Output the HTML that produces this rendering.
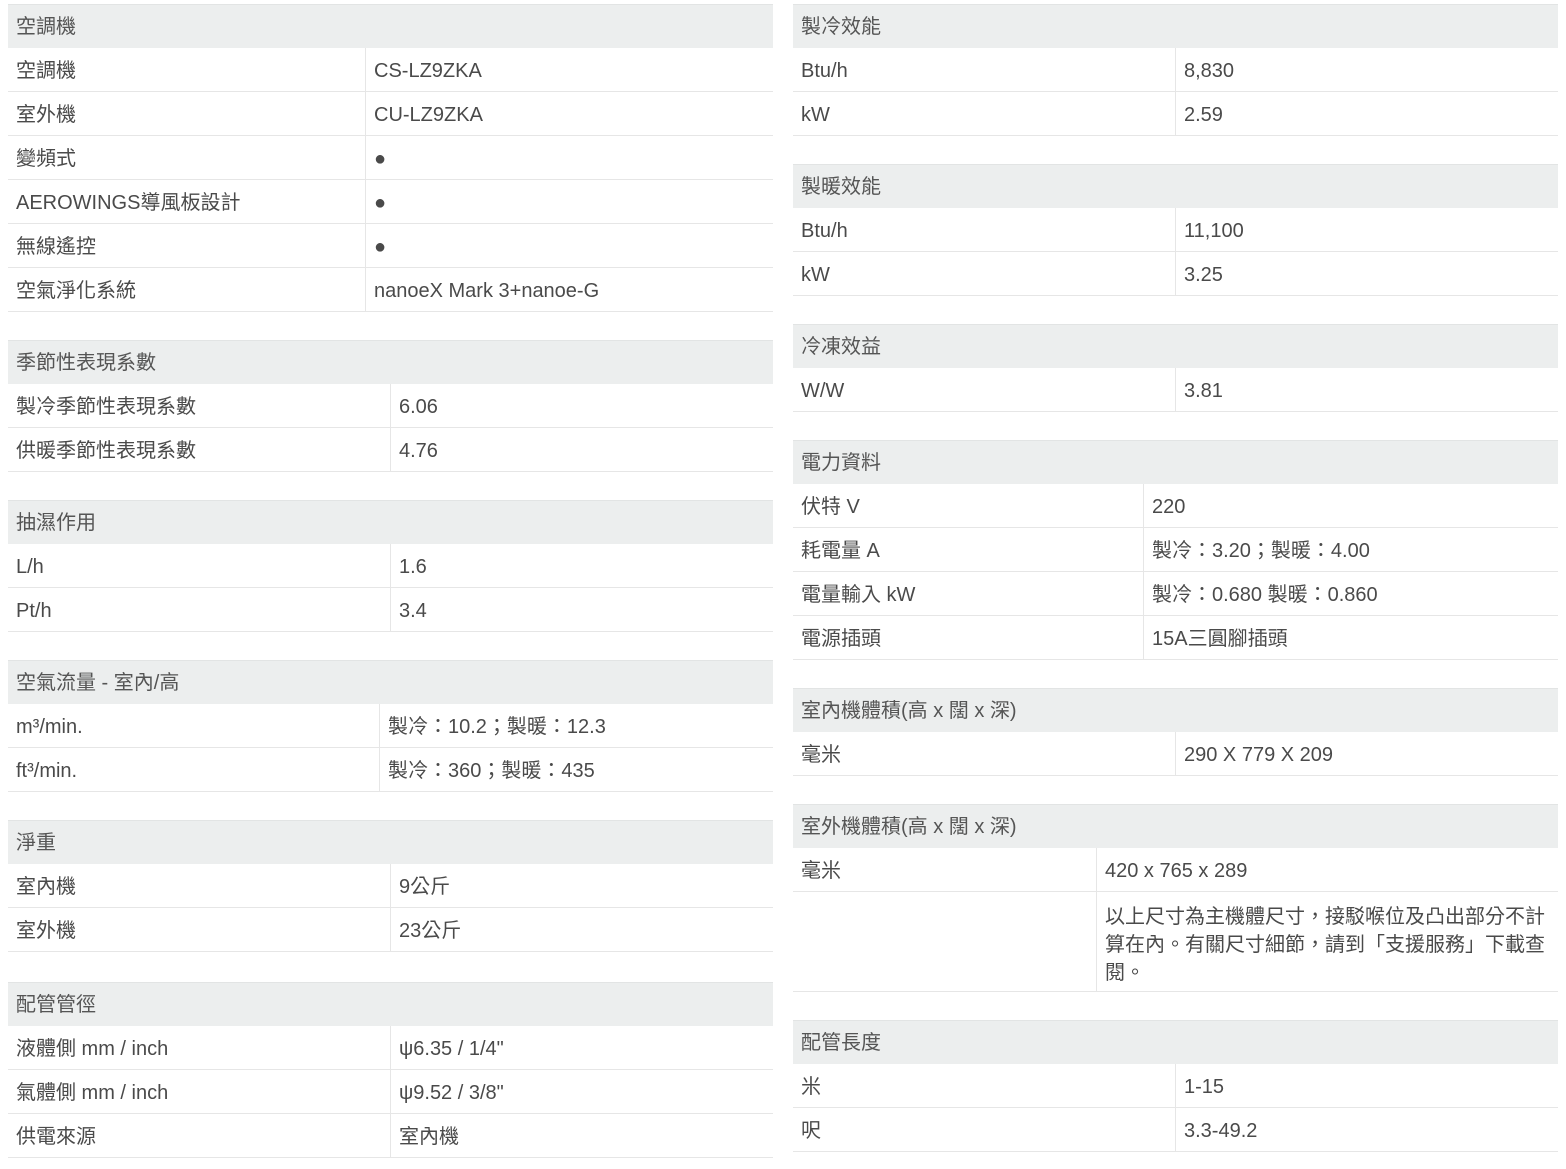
<!DOCTYPE html>
<html><head><meta charset="utf-8"><style>
body{margin:0;background:#fff;width:1566px;height:1169px;position:relative;overflow:hidden;font-family:"Liberation Sans","Noto Sans CJK TC",sans-serif;font-size:20px;color:#4a4a4a}
.t{position:absolute}
.h{height:44px;line-height:44px;background:#eceeee;padding-left:8px;color:#555;border-top:1px solid #e2e4e4;box-sizing:border-box}
.r{height:44px;display:flex;border-bottom:1px solid #e6e6e6;box-sizing:border-box;line-height:46px}
.r div{padding-left:8px;box-sizing:border-box}
.r div:first-child{border-right:1px solid #e6e6e6}
.L{left:8px;width:765px}
.R{left:793px;width:765px}
</style></head><body>

<div class="t L" style="top:4px">
<div class="h">空調機</div>
<div class="r"><div style="width:358px">空調機</div><div>CS-LZ9ZKA</div></div>
<div class="r"><div style="width:358px">室外機</div><div>CU-LZ9ZKA</div></div>
<div class="r"><div style="width:358px">變頻式</div><div>●</div></div>
<div class="r"><div style="width:358px">AEROWINGS導風板設計</div><div>●</div></div>
<div class="r"><div style="width:358px">無線遙控</div><div>●</div></div>
<div class="r"><div style="width:358px">空氣淨化系統</div><div>nanoeX Mark 3+nanoe-G</div></div>
</div>

<div class="t L" style="top:340px">
<div class="h">季節性表現系數</div>
<div class="r"><div style="width:383px">製冷季節性表現系數</div><div>6.06</div></div>
<div class="r"><div style="width:383px">供暖季節性表現系數</div><div>4.76</div></div>
</div>

<div class="t L" style="top:500px">
<div class="h">抽濕作用</div>
<div class="r"><div style="width:383px">L/h</div><div>1.6</div></div>
<div class="r"><div style="width:383px">Pt/h</div><div>3.4</div></div>
</div>

<div class="t L" style="top:660px">
<div class="h">空氣流量 - 室內/高</div>
<div class="r"><div style="width:372px">m³/min.</div><div>製冷：10.2；製暖：12.3</div></div>
<div class="r"><div style="width:372px">ft³/min.</div><div>製冷：360；製暖：435</div></div>
</div>

<div class="t L" style="top:820px">
<div class="h">淨重</div>
<div class="r"><div style="width:383px">室內機</div><div>9公斤</div></div>
<div class="r"><div style="width:383px">室外機</div><div>23公斤</div></div>
</div>

<div class="t L" style="top:982px">
<div class="h">配管管徑</div>
<div class="r"><div style="width:383px">液體側 mm / inch</div><div>ψ6.35 / 1/4"</div></div>
<div class="r"><div style="width:383px">氣體側 mm / inch</div><div>ψ9.52 / 3/8"</div></div>
<div class="r"><div style="width:383px">供電來源</div><div>室內機</div></div>
</div>

<div class="t R" style="top:4px">
<div class="h">製冷效能</div>
<div class="r"><div style="width:383px">Btu/h</div><div>8,830</div></div>
<div class="r"><div style="width:383px">kW</div><div>2.59</div></div>
</div>

<div class="t R" style="top:164px">
<div class="h">製暖效能</div>
<div class="r"><div style="width:383px">Btu/h</div><div>11,100</div></div>
<div class="r"><div style="width:383px">kW</div><div>3.25</div></div>
</div>

<div class="t R" style="top:324px">
<div class="h">冷凍效益</div>
<div class="r"><div style="width:383px">W/W</div><div>3.81</div></div>
</div>

<div class="t R" style="top:440px">
<div class="h">電力資料</div>
<div class="r"><div style="width:351px">伏特 V</div><div>220</div></div>
<div class="r"><div style="width:351px">耗電量 A</div><div>製冷：3.20；製暖：4.00</div></div>
<div class="r"><div style="width:351px">電量輸入 kW</div><div>製冷：0.680 製暖：0.860</div></div>
<div class="r"><div style="width:351px">電源插頭</div><div>15A三圓腳插頭</div></div>
</div>

<div class="t R" style="top:688px">
<div class="h">室內機體積(高 x 闊 x 深)</div>
<div class="r"><div style="width:383px">毫米</div><div>290 X 779 X 209</div></div>
</div>

<div class="t R" style="top:804px">
<div class="h">室外機體積(高 x 闊 x 深)</div>
<div class="r"><div style="width:304px">毫米</div><div>420 x 765 x 289</div></div>
<div class="r" style="height:100px;line-height:28px"><div style="width:304px"></div><div style="width:461px;padding-top:11px;padding-right:10px">以上尺寸為主機體尺寸，接駁喉位及凸出部分不計算在內。有關尺寸細節，請到「支援服務」下載查閱。</div></div>
</div>

<div class="t R" style="top:1020px">
<div class="h">配管長度</div>
<div class="r"><div style="width:383px">米</div><div>1-15</div></div>
<div class="r"><div style="width:383px">呎</div><div>3.3-49.2</div></div>
</div>

</body></html>
